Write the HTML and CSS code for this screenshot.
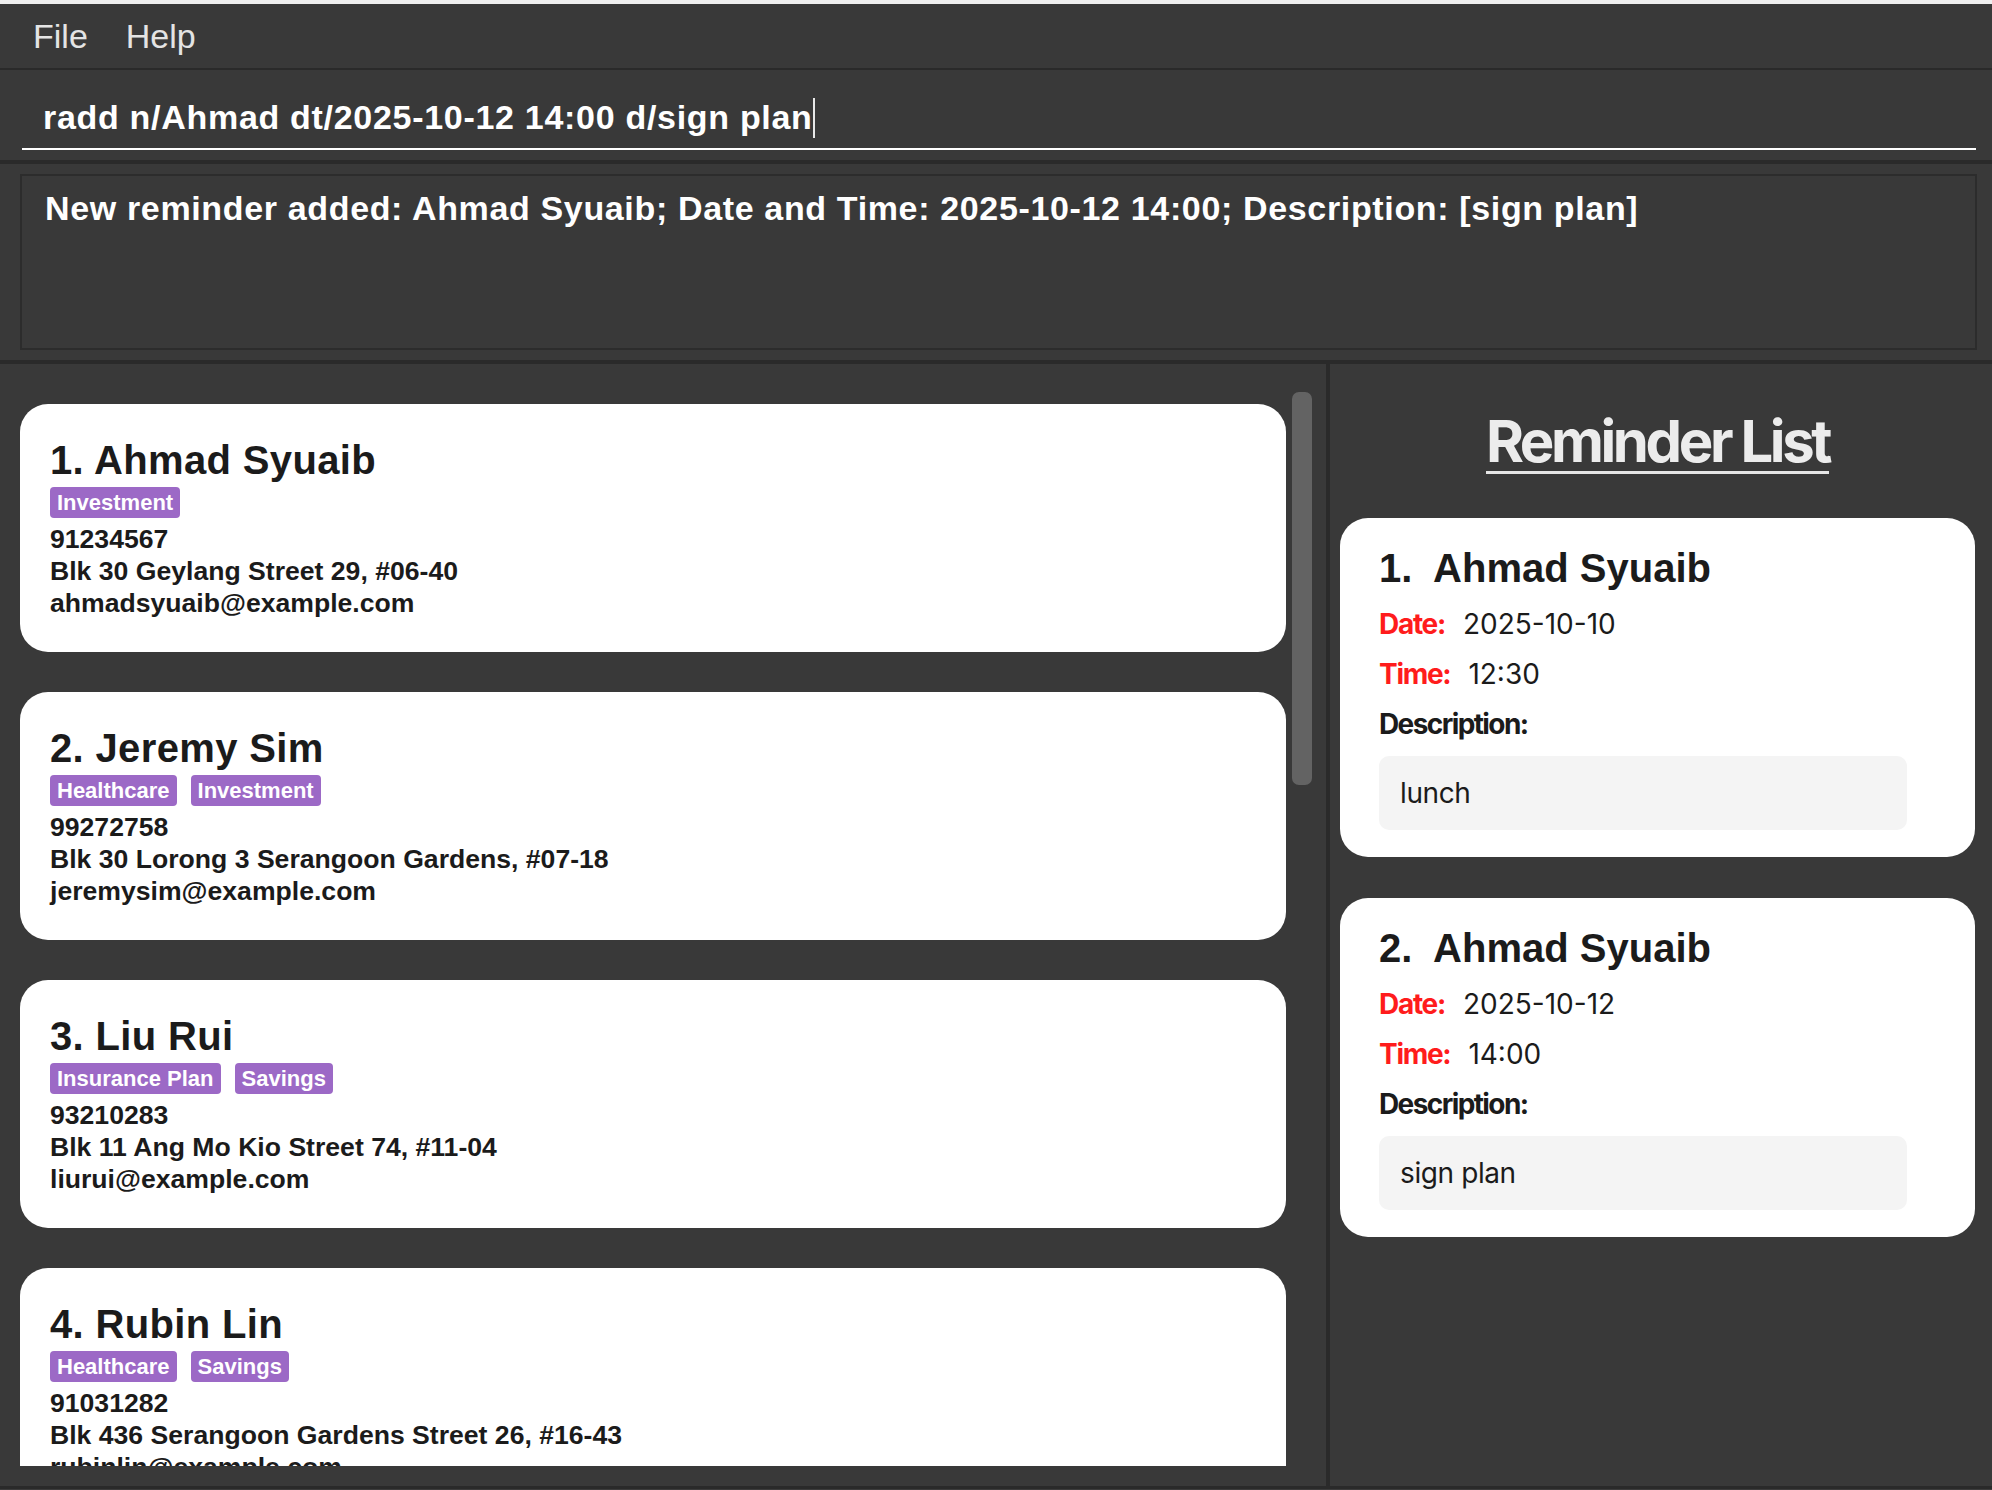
FILE: index.html
```html
<!DOCTYPE html>
<html>
<head>
<meta charset="utf-8">
<link rel="stylesheet" href="styles.css">
</head>
<body>
<div class="topstrip"></div>
<div class="menubar"><span class="menu">File</span><span class="menu">Help</span></div>
<div class="cmdbar">
  <div class="cmd"><span class="cmdtext">radd n/Ahmad dt/2025-10-12 14:00 d/sign plan</span><span class="caret"></span></div>
</div>
<div class="resultbar">
  <div class="result">New reminder added: Ahmad Syuaib; Date and Time: 2025-10-12 14:00; Description: [sign plan]</div>
</div>
<div class="main">
  <div class="left">
    <div class="list">
      <div class="pcard">
        <div class="pname">1. Ahmad Syuaib</div>
        <div class="tags"><span class="tag">Investment</span></div>
        <div class="pline">91234567</div>
        <div class="pline">Blk 30 Geylang Street 29, #06-40</div>
        <div class="pline">ahmadsyuaib@example.com</div>
      </div>
      <div class="pcard">
        <div class="pname">2. Jeremy Sim</div>
        <div class="tags"><span class="tag">Healthcare</span><span class="tag">Investment</span></div>
        <div class="pline">99272758</div>
        <div class="pline">Blk 30 Lorong 3 Serangoon Gardens, #07-18</div>
        <div class="pline">jeremysim@example.com</div>
      </div>
      <div class="pcard">
        <div class="pname">3. Liu Rui</div>
        <div class="tags"><span class="tag">Insurance Plan</span><span class="tag">Savings</span></div>
        <div class="pline">93210283</div>
        <div class="pline">Blk 11 Ang Mo Kio Street 74, #11-04</div>
        <div class="pline">liurui@example.com</div>
      </div>
      <div class="pcard">
        <div class="pname">4. Rubin Lin</div>
        <div class="tags"><span class="tag">Healthcare</span><span class="tag">Savings</span></div>
        <div class="pline">91031282</div>
        <div class="pline">Blk 436 Serangoon Gardens Street 26, #16-43</div>
        <div class="pline">rubinlin@example.com</div>
      </div>
    </div>
    <div class="track"><div class="thumb"></div></div>
  </div>
  <div class="divider"></div>
  <div class="right">
    <div class="rhead"><span class="rtitle">Reminder List</span></div>
    <div class="rcard">
      <div class="rname">1.&nbsp; Ahmad Syuaib</div>
      <div class="rrow"><span class="rlabel">Date:</span><span class="rval">2025-10-10</span></div>
      <div class="rrow"><span class="rlabel">Time:</span><span class="rval">12:30</span></div>
      <div class="rrow"><span class="dlabel">Description:</span></div>
      <div class="dbox">lunch</div>
    </div>
    <div class="rcard">
      <div class="rname">2.&nbsp; Ahmad Syuaib</div>
      <div class="rrow"><span class="rlabel">Date:</span><span class="rval">2025-10-12</span></div>
      <div class="rrow"><span class="rlabel">Time:</span><span class="rval">14:00</span></div>
      <div class="rrow"><span class="dlabel">Description:</span></div>
      <div class="dbox">sign plan</div>
    </div>
  </div>
</div>
<div class="bottomline"></div>
</body>
</html>
```

FILE: styles.css
```css
* { box-sizing: border-box; }
html, body { margin: 0; padding: 0; }
body {
  width: 1992px;
  height: 1490px;
  overflow: hidden;
  background: #393939;
  font-family: "Liberation Sans", Arial, sans-serif;
}
.topstrip { height: 4px; background: #efefef; }
.menubar {
  height: 66px;
  border-bottom: 2px solid #2a2a2a;
  display: flex;
  align-items: flex-start;
  padding-left: 33px;
  gap: 38px;
}
.menu {
  font-size: 34px;
  line-height: 64px;
  color: #e4e4e4;
}
.cmdbar {
  height: 94px;
  border-bottom: 4px solid #2a2a2a;
  padding: 0 16px 0 22px;
}
.cmd {
  height: 80px;
  border-bottom: 2px solid #ffffff;
  padding: 16px 0 0 21px;
  line-height: 62px;
  white-space: nowrap;
}
.cmdtext {
  font-size: 34px;
  font-weight: bold;
  letter-spacing: 0.7px;
  color: #ffffff;
}
.caret {
  display: inline-block;
  width: 2px;
  height: 40px;
  background: #e8e8e8;
  vertical-align: -9px;
  margin-left: 0;
}
.resultbar {
  height: 200px;
  border-bottom: 4px solid #2a2a2a;
  padding: 10px 15px 10px 20px;
}
.result {
  height: 176px;
  border: 2px solid #2c2c2c;
  padding: 12px 0 0 23px;
  font-size: 34px;
  line-height: 40px;
  font-weight: bold;
  letter-spacing: 0.65px;
  color: #ffffff;
  white-space: nowrap;
}
.main {
  height: 1122px;
  display: flex;
}
.left {
  width: 1326px;
  display: flex;
}
.list {
  width: 1286px;
  height: 1102px;
  overflow: hidden;
  padding: 40px 0 0 20px;
  display: flex;
  flex-direction: column;
  gap: 40px;
}
.pcard {
  flex: none;
  background: #ffffff;
  border-radius: 28px;
  height: 248px;
  padding: 33px 20px 0 30px;
  color: #1b1b1b;
}
.pname {
  font-size: 40px;
  font-weight: bold;
  letter-spacing: 0.35px;
  line-height: 46px;
  white-space: nowrap;
}
.tags {
  display: flex;
  gap: 14px;
  margin-top: 4px;
  height: 31px;
}
.tag {
  background: #9c69c6;
  color: #ffffff;
  font-size: 22px;
  font-weight: bold;
  line-height: 31px;
  padding: 0 7px;
  border-radius: 4px;
}
.pline {
  font-size: 26.6px;
  font-weight: bold;
  line-height: 32px;
  white-space: nowrap;
}
.tags + .pline { margin-top: 5px; }
.track {
  margin-left: 6px;
  width: 20px;
  padding-top: 28px;
}
.thumb {
  height: 393px;
  background: #636363;
  border-radius: 7px;
}
.divider {
  width: 4px;
  background: #2a2a2a;
}
.right {
  flex: 1;
  padding: 48px 17px 0 10px;
  display: flex;
  flex-direction: column;
}
.rhead {
  text-align: center;
  height: 62px;
  margin-bottom: 44px;
}
.rtitle {
  display: inline-block;
  font-family: Inter, "Liberation Sans", sans-serif;
  font-weight: bold;
  font-size: 58px;
  line-height: 58px;
  letter-spacing: -3.4px;
  color: #ececec;
  padding-bottom: 1px;
  border-bottom: 3px solid #e6e6e6;
}
.rcard {
  background: #ffffff;
  border-radius: 28px;
  padding: 27px 68px 27px 39px;
  margin-bottom: 41px;
  color: #1b1b1b;
}
.rname {
  font-size: 40px;
  font-weight: bold;
  line-height: 46px;
  margin-bottom: 8px;
  white-space: nowrap;
}
.rrow {
  font-family: Inter, "Liberation Sans", sans-serif;
  font-size: 28px;
  line-height: 50px;
  height: 50px;
  display: flex;
  gap: 18px;
}
.rlabel {
  color: #ff1c1c;
  font-weight: bold;
  letter-spacing: -1.3px;
}
.dlabel {
  color: #1b1b1b;
  font-weight: bold;
  letter-spacing: -1.6px;
}
.rval {
  color: #1b1b1b;
}
.dbox {
  margin-top: 7px;
  height: 74px;
  background: #f4f4f4;
  border-radius: 10px;
  padding-left: 21px;
  font-family: Inter, "Liberation Sans", sans-serif;
  font-size: 28px;
  line-height: 74px;
  letter-spacing: -0.4px;
  color: #1b1b1b;
}
.bottomline {
  height: 4px;
  border-top: 3px solid #2a2a2a;
  background: #3c3c3c;
}
```
